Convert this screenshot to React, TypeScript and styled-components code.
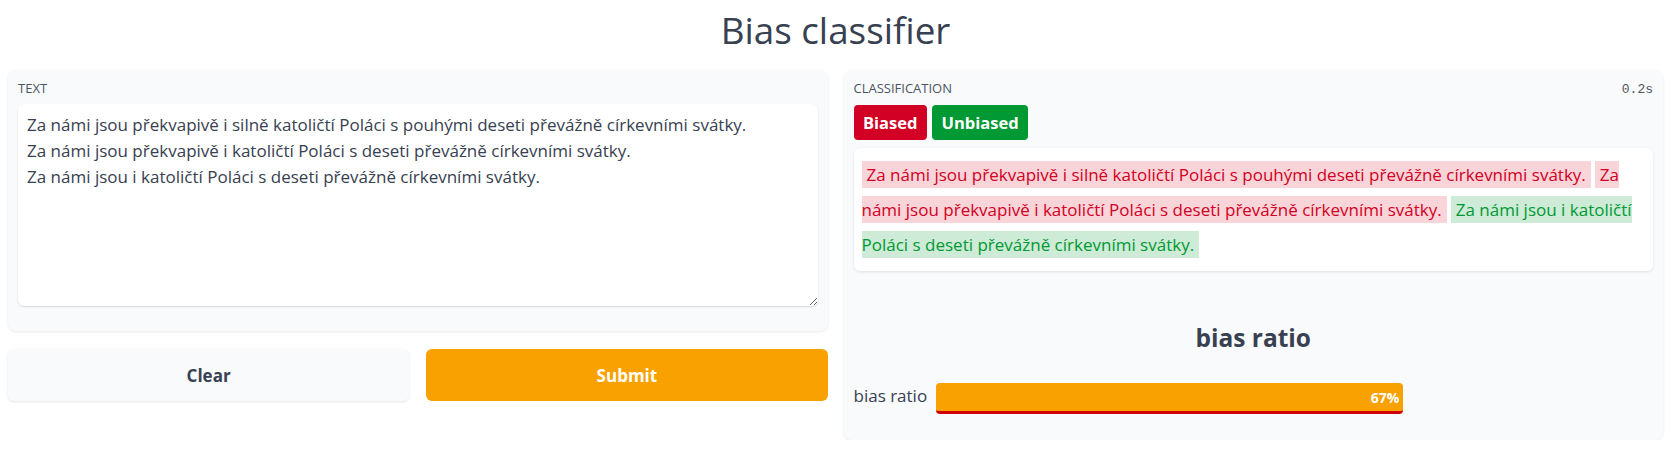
import React from "react";
import styled, { createGlobalStyle } from "styled-components";

const GlobalStyle = createGlobalStyle`
  body {
    margin: 0;
    background: #ffffff;
    color: #374151;
    font-family: "Open Sans", "Noto Sans", sans-serif;
  }
`;

const Page = styled.div`
  padding: 0 9px 0 8px;
`;

const Title = styled.h1`
  margin: 0 0 18px;
  padding-top: 8px;
  font-size: 36.8px;
  line-height: 44px;
  font-weight: 400;
  text-align: center;
  color: #374151;
`;

const Columns = styled.div`
  display: grid;
  grid-template-columns: 1fr 1fr;
  gap: 16px;
  align-items: start;
`;

const Column = styled.div`
  display: flex;
  flex-direction: column;
  gap: 18px;
`;

const Panel = styled.div<{ $bottom: number }>`
  background: #f9fafb;
  border-radius: 8px;
  box-shadow: 0 1px 3px rgba(0, 0, 0, 0.09);
  padding: 10px 10px ${(p) => p.$bottom}px;
  display: flex;
  flex-direction: column;
`;

const PanelHeader = styled.div`
  display: flex;
  justify-content: space-between;
  align-items: baseline;
`;

const Label = styled.span`
  font-size: 13px;
  line-height: 16px;
  text-transform: uppercase;
  color: #4b5563;
`;

const Timer = styled.span`
  font-family: "Liberation Mono", monospace;
  font-size: 13px;
  line-height: 16px;
  color: #4b5563;
`;

const TextArea = styled.textarea`
  margin-top: 8px;
  height: 202px;
  box-sizing: border-box;
  border: none;
  border-radius: 6px;
  background: #ffffff;
  box-shadow: 0 1px 2px rgba(0, 0, 0, 0.14);
  padding: 8px 9px;
  font-family: inherit;
  font-size: 17px;
  line-height: 26px;
  color: #374151;
  resize: vertical;
  outline: none;
`;

const ButtonRow = styled.div`
  display: grid;
  grid-template-columns: 1fr 1fr;
  gap: 17px;
`;

const Button = styled.button<{ $primary?: boolean }>`
  height: 52px;
  border: none;
  border-radius: 6px;
  font-family: inherit;
  font-size: 17px;
  font-weight: 700;
  cursor: pointer;
  background: ${(p) => (p.$primary ? "#f9a100" : "#f9fafb")};
  color: ${(p) => (p.$primary ? "#ffffff" : "#374151")};
  box-shadow: ${(p) =>
    p.$primary ? "none" : "0 1px 3px rgba(0, 0, 0, 0.1)"};
`;

const Legend = styled.div`
  display: flex;
  gap: 5px;
  margin-top: 7px;
`;

const Badge = styled.span<{ $color: string }>`
  height: 35px;
  line-height: 35px;
  padding: 0 9.5px;
  border-radius: 4px;
  background: ${(p) => p.$color};
  color: #ffffff;
  font-size: 16.5px;
  font-weight: 700;
`;

const Highlights = styled.div`
  margin-top: 8px;
  background: #ffffff;
  border-radius: 6px;
  box-shadow: 0 1px 3px rgba(0, 0, 0, 0.1);
  padding: 9px 8px 9px;
  font-size: 17px;
  line-height: 35px;
`;

const Span = styled.span<{ $bg: string; $fg: string }>`
  background: ${(p) => p.$bg};
  color: ${(p) => p.$fg};
  padding: 2px 5px;
  margin-right: 4px;
`;

const Heading = styled.h2`
  margin: 51px 0 0;
  font-size: 24.5px;
  line-height: 32px;
  font-weight: 700;
  text-align: center;
  color: #374151;
`;

const BarRow = styled.div`
  display: flex;
  align-items: flex-start;
  gap: 9px;
  margin-top: 29px;
`;

const BarLabel = styled.span`
  font-size: 17px;
  line-height: 25px;
  color: #374151;
`;

const Track = styled.div`
  flex: 1;
  margin-right: 16px;
`;

const Bar = styled.div`
  box-sizing: border-box;
  height: 31px;
  background: #f9a100;
  border-bottom: 3px solid #d10000;
  border-radius: 4px;
  display: flex;
  align-items: center;
  justify-content: flex-end;
  padding-right: 4px;
  color: #ffffff;
  font-size: 14px;
  font-weight: 700;
`;

const COLORS = {
  biased: { solid: "#d10024", bg: "#f9d4d8", fg: "#d10024" },
  unbiased: { solid: "#009933", bg: "#cdebd6", fg: "#009933" },
};

const sentences: { text: string; kind: "biased" | "unbiased" }[] = [
  {
    text: "Za námi jsou překvapivě i silně katoličtí Poláci s pouhými deseti převážně církevními svátky.",
    kind: "biased",
  },
  {
    text: "Za námi jsou překvapivě i katoličtí Poláci s deseti převážně církevními svátky.",
    kind: "biased",
  },
  {
    text: "Za námi jsou i katoličtí Poláci s deseti převážně církevními svátky.",
    kind: "unbiased",
  },
];

export default function App() {
  const ratio = 2 / 3;
  return (
    <Page>
      <GlobalStyle />
      <Title>Bias classifier</Title>
      <Columns>
        <Column>
          <Panel $bottom={25}>
            <Label>Text</Label>
            <TextArea
              defaultValue={sentences.map((s) => s.text).join("\n")}
            />
          </Panel>
          <ButtonRow>
            <Button>Clear</Button>
            <Button $primary>Submit</Button>
          </ButtonRow>
        </Column>
        <Panel $bottom={26}>
          <PanelHeader>
            <Label>Classification</Label>
            <Timer>0.2s</Timer>
          </PanelHeader>
          <Legend>
            <Badge $color={COLORS.biased.solid}>Biased</Badge>
            <Badge $color={COLORS.unbiased.solid}>Unbiased</Badge>
          </Legend>
          <Highlights>
            {sentences.map((s, i) => (
              <Span key={i} $bg={COLORS[s.kind].bg} $fg={COLORS[s.kind].fg}>
                {s.text}
              </Span>
            ))}
          </Highlights>
          <Heading>bias ratio</Heading>
          <BarRow>
            <BarLabel>bias ratio</BarLabel>
            <Track>
              <Bar style={{ width: `${ratio * 100}%` }}>
                {Math.round(ratio * 100)}%
              </Bar>
            </Track>
          </BarRow>
        </Panel>
      </Columns>
    </Page>
  );
}
